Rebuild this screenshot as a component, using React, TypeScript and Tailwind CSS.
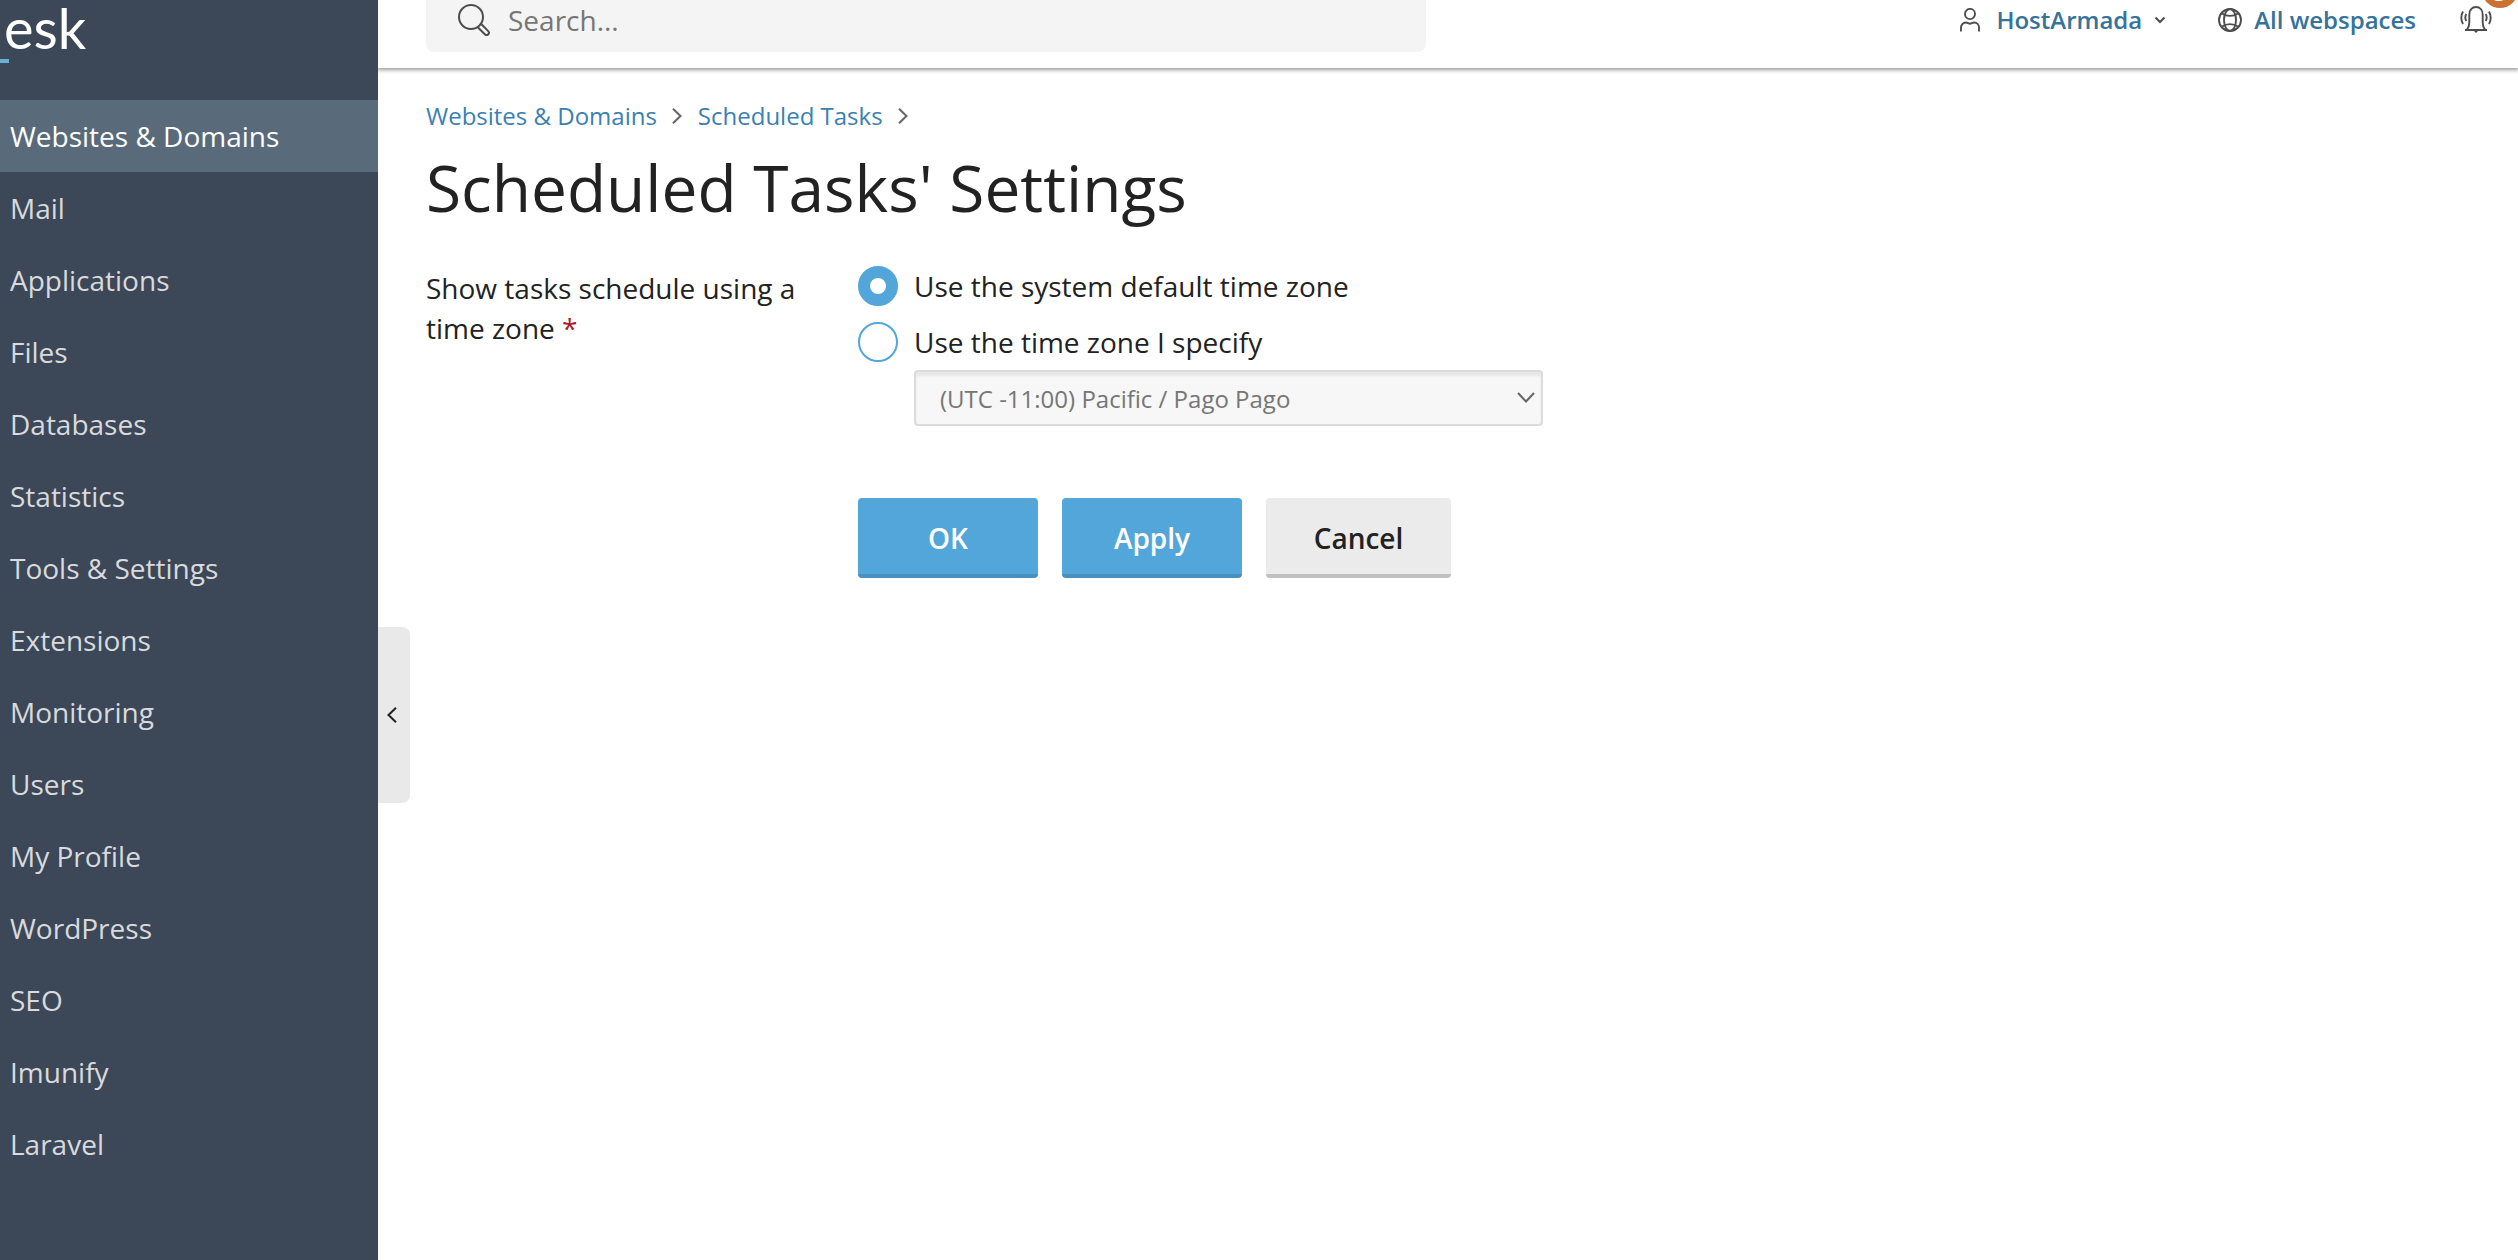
import React, { useState } from "react";
import clsx from "clsx";

interface IconProps {
  className?: string;
}

const navItems = [
  "Websites & Domains",
  "Mail",
  "Applications",
  "Files",
  "Databases",
  "Statistics",
  "Tools & Settings",
  "Extensions",
  "Monitoring",
  "Users",
  "My Profile",
  "WordPress",
  "SEO",
  "Imunify",
  "Laravel",
];

const breadcrumbs = ["Websites & Domains", "Scheduled Tasks"];

const SearchIcon = ({ className }: IconProps) => (
  <svg className={className} viewBox="0 0 32 32" fill="none" stroke="currentColor" strokeWidth="2">
    <circle cx="13" cy="13" r="12" />
    <path d="M20 23.5l6.800 6.800a2.200 2.200 0 0 0 3.400-3.200L23.200 20" strokeLinejoin="round" />
  </svg>
);

const UserIcon = ({ className }: IconProps) => (
  <svg className={className} viewBox="0 0 20 24" fill="none" stroke="currentColor" strokeWidth="1.900">
    <ellipse cx="10" cy="6" rx="5" ry="5.1" />
    <path d="M1 23.500v-4a5 5 0 0 1 5-5c1.800 0 2.400 1.200 4 1.200s2.200-1.200 4-1.200a5 5 0 0 1 5 5v4" />
  </svg>
);

const GlobeIcon = ({ className }: IconProps) => (
  <svg className={className} viewBox="0 0 24 24" fill="none" stroke="currentColor" strokeWidth="1.900">
    <circle cx="12" cy="12" r="11" />
    <ellipse cx="12" cy="12" rx="6" ry="11" />
    <path d="M4 5.500c4.500 3.200 11.500 3.200 16 0M4 18.500c4.500-3.200 11.500-3.200 16 0" />
  </svg>
);

const BellIcon = ({ className }: IconProps) => (
  <svg className={className} viewBox="0 0 32 28" fill="none" stroke="currentColor" strokeWidth="1.900">
    <path d="M5 24h22M7 23.500c1.600-2 2.300-4 2.300-7V8.500C9.300 4 12 1 16 1s6.700 3 6.700 7.500v8c0 3 .7 5 2.300 7" />
    <path d="M13.500 24.500h5L16 27z" fill="currentColor" stroke="none" />
    <path d="M3 5.500c-2.200 4-2.200 8.500 0 12.500M6.300 8c-1.300 2.300-1.300 4.700 0 7M29 5.500c2.200 4 2.200 8.500 0 12.500M25.700 8c1.300 2.300 1.300 4.700 0 7" />
  </svg>
);

const ChevronRight = ({ className }: IconProps) => (
  <svg className={className} viewBox="0 0 10 16" fill="none" stroke="currentColor" strokeWidth="2">
    <path d="M1 .800L8.500 8 1 15.200" />
  </svg>
);

const ChevronDown = ({ className }: IconProps) => (
  <svg className={className} viewBox="0 0 18 11" fill="none" stroke="currentColor" strokeWidth="2">
    <path d="M1 1l8 8.500L17 1" />
  </svg>
);

const Sidebar = () => (
  <aside className="relative w-[378px] shrink-0 bg-[#3c4858]">
    <a href="#home" className="flex h-[100px] flex-col items-start gap-[3px] text-white">
      <span className="pl-1 font-['Lato',sans-serif] text-[56px] leading-[56px]">esk</span>
      <span className="h-1 w-[9px] bg-[#67b2d4]" />
    </a>
    <nav>
      {navItems.map((item, index) => (
        <a
          key={item}
          href="#section"
          className={clsx(
            "flex h-[72px] items-center pl-[10px] text-[28px]",
            index === 0 ? "bg-[#596a7b] text-white" : "text-[#d8dadd]",
          )}
        >
          {item}
        </a>
      ))}
    </nav>
    <button
      type="button"
      aria-label="Collapse sidebar"
      className="absolute top-[627px] left-full flex h-44 w-8 items-center rounded-r-lg bg-[#e9e9e9] pl-[9px] text-[#222]"
    >
      <ChevronRight className="h-4 w-[10px] rotate-180" />
    </button>
  </aside>
);

const Header = () => (
  <header className="flex h-[68px] items-start justify-between bg-white pl-12 shadow-[0_1px_4px_1px_rgba(0,0,0,0.4)]">
    <form className="flex h-[52px] w-[1000px] items-center rounded-b-lg bg-[#f4f4f4] pb-3 pl-8">
      <SearchIcon className="h-8 w-8 shrink-0 text-[#4d4d4d]" />
      <input
        type="text"
        aria-label="Search"
        placeholder="Search..."
        className="ml-[18px] h-10 flex-1 bg-transparent text-[28px] outline-none placeholder:text-[#767676]"
      />
    </form>
    <div className="flex h-10 items-center pr-[26px] text-2xl font-semibold text-[#35739b]">
      <button type="button" className="flex items-center">
        <UserIcon className="mr-4 h-6 w-5 text-[#4d4d4d]" />
        HostArmada
        <svg
          className="ml-3 h-2 w-3 text-[#4d4d4d]"
          viewBox="0 0 12 8"
          fill="none"
          stroke="currentColor"
          strokeWidth="2"
        >
          <path d="M1.500 1.500L6 6l4.500-4.500" />
        </svg>
      </button>
      <button type="button" className="ml-[52px] flex items-center">
        <GlobeIcon className="mr-3 h-6 w-6 text-[#4d4d4d]" />
        All webspaces
      </button>
      <button type="button" aria-label="Notifications" className="relative ml-11 text-[#4d4d4d]">
        <BellIcon className="h-7 w-8" />
        <span className="absolute -top-[34px] left-[22px] h-9 w-9 rounded-full bg-[#cc7230] text-center text-2xl leading-10 text-white">
          3
        </span>
      </button>
    </div>
  </header>
);

const radioClass =
  "h-10 w-10 shrink-0 appearance-none rounded-full border-2 border-[#53a6d9] bg-white checked:border-[12px]";

const primaryButtonClass =
  "h-20 w-[180px] rounded-sm border-b-4 border-[#4a90bc] bg-[#53a6d9] pt-1 text-white";

const SettingsForm = () => {
  const [mode, setMode] = useState<"default" | "custom">("default");

  return (
    <form onSubmit={(e) => e.preventDefault()} className="mt-8 text-[28px] text-[#222]">
      <div className="flex items-start" role="radiogroup" aria-labelledby="zone-label">
        <div id="zone-label" className="w-[432px] pt-[2px] pr-12 leading-10">
          Show tasks schedule using a time zone <span className="text-[#a8202c]">*</span>
        </div>
        <div>
          <label className="flex h-10 items-center gap-4">
            <input
              type="radio"
              name="zone"
              className={radioClass}
              checked={mode === "default"}
              onChange={() => setMode("default")}
            />
            Use the system default time zone
          </label>
          <label className="mt-4 flex h-10 items-center gap-4">
            <input
              type="radio"
              name="zone"
              className={radioClass}
              checked={mode === "custom"}
              onChange={() => setMode("custom")}
            />
            Use the time zone I specify
          </label>
          <div className="relative mt-2 ml-14 w-[629px]">
            <select
              aria-label="Time zone"
              disabled={mode === "default"}
              className="h-14 w-full appearance-none rounded-sm border-2 border-[#dcdcdc] bg-[#f7f7f7] pt-[2px] pl-6 text-2xl text-[#767676] opacity-100 shadow-[inset_0_4px_2px_#e8e8e8]"
            >
              <option>(UTC -11:00) Pacific / Pago Pago</option>
            </select>
            <ChevronDown className="pointer-events-none absolute top-[22px] right-2 h-[11px] w-[18px] text-[#666]" />
          </div>
        </div>
      </div>
      <div className="mt-[72px] ml-[432px] flex gap-6 font-semibold">
        <button type="submit" className={primaryButtonClass}>
          OK
        </button>
        <button type="button" className={primaryButtonClass}>
          Apply
        </button>
        <button type="button" className="h-20 w-[185px] rounded-sm border-b-4 border-[#c0c0c0] bg-[#ebebeb] pt-1">
          Cancel
        </button>
      </div>
    </form>
  );
};

export default function App() {
  return (
    <div className="flex min-h-screen overflow-x-hidden bg-white font-['Open_Sans',sans-serif]">
      <Sidebar />
      <div className="min-w-0 flex-1">
        <Header />
        <main className="px-12 pt-8">
          <nav aria-label="Breadcrumb" className="flex items-center text-2xl text-[#3a80b1]">
            {breadcrumbs.map((crumb) => (
              <React.Fragment key={crumb}>
                <a href="#crumb">{crumb}</a>
                <ChevronRight className="mr-4 ml-[15px] h-4 w-[10px] text-[#666]" />
              </React.Fragment>
            ))}
          </nav>
          <h1 className="mt-3 pb-[2px] text-[64px] leading-[88px] text-[#222]">Scheduled Tasks' Settings</h1>
          <SettingsForm />
        </main>
      </div>
    </div>
  );
}
